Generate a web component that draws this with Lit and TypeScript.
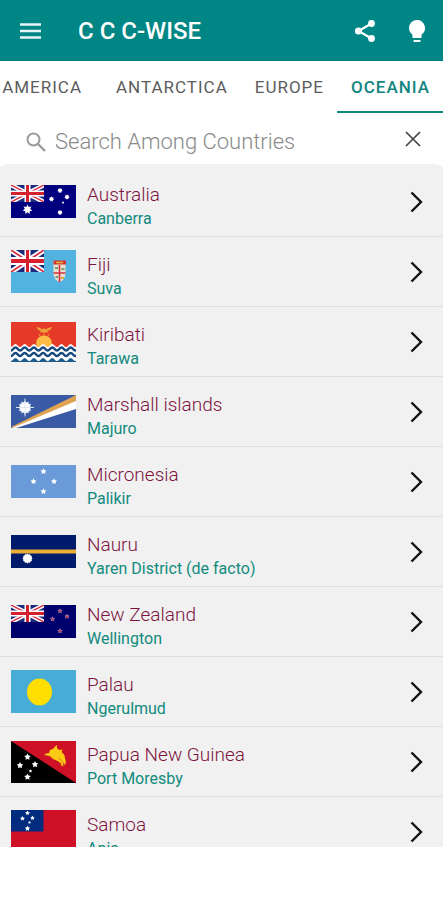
import { LitElement, html, svg, css, type SVGTemplateResult } from "lit";
import { customElement, property, state } from "lit/decorators.js";

interface Country {
  name: string;
  capital: string;
  height: number;
  flag: SVGTemplateResult;
}

/** Star with n points, centred on cx, cy. */
const star = (cx: number, cy: number, r: number, n = 5, inner = 0.5, fill = "#fff") => {
  const pts: string[] = [];
  for (let i = 0; i < n * 2; i++) {
    const a = (Math.PI * i) / n - Math.PI / 2;
    const q = i % 2 ? r * inner : r;
    pts.push(`${(cx + q * Math.cos(a)).toFixed(2)},${(cy + q * Math.sin(a)).toFixed(2)}`);
  }
  return svg`<polygon points=${pts.join(" ")} fill=${fill}></polygon>`;
};

const unionJack = (h: number) => svg`
  <svg width="33" height=${h} viewBox="0 0 60 30" preserveAspectRatio="none">
    <rect width="60" height="30" fill="#1c2a7c"></rect>
    <path d="M0 0L60 30M60 0L0 30" stroke="#fff" stroke-width="8"></path>
    <path d="M0 0L60 30M60 0L0 30" stroke="#d5263a" stroke-width="2.4"></path>
    <path d="M30 0V30M0 15H60" stroke="#fff" stroke-width="11"></path>
    <path d="M30 0V30M0 15H60" stroke="#d5202f" stroke-width="5.5"></path>
  </svg>`;

const wave = (y: number) => {
  let d = `M-7 ${y}`;
  for (let i = 0; i < 9; i++) d += "q2.3 -3 4.600 0t4.600 0";
  return d;
};

const countries: Country[] = [
  {
    name: "Australia", capital: "Canberra", height: 33,
    flag: svg`<rect width="65" height="33" fill="#00007e"></rect>${unionJack(17)}
      ${star(16.5, 24.5, 5, 7, 0.55)}${star(49, 5.5, 2.7, 7, 0.65)}${star(40.5, 14, 2.7, 7, 0.65)}
      ${star(56, 12, 2.7, 7, 0.65)}${star(52, 17.5, 1.5)}${star(49, 27.5, 2.7, 7, 0.65)}`,
  },
  {
    name: "Fiji", capital: "Suva", height: 43,
    flag: svg`<rect width="65" height="43" fill="#53b3e0"></rect>${unionJack(22)}
      <path d="M42.5 11h12v11q0 8-6 10q-6-2-6-10z" fill="#eadfd4"></path>
      <path d="M42.5 10.5h12.5v4h-12.5z" fill="#d4342a"></path>
      <path d="M45 12.5h7" stroke="#e9b23c" stroke-width="1.5"></path>
      <path d="M48.5 15v17M42.5 23h12" stroke="#d3303a" stroke-width="1.600"></path>
      <path d="M44 18h3M50.5 19h3M44.5 27h2.5" stroke="#7f9a62" stroke-width="1.800"></path>
      <path d="M50 28h3" stroke="#d9a640" stroke-width="2"></path>`,
  },
  {
    name: "Kiribati", capital: "Tarawa", height: 40,
    flag: svg`<rect width="65" height="40" fill="#e63a29"></rect>
      <circle cx="33" cy="21.5" r="8" fill="#fbbd46"></circle>
      <path d="M33 11v3M28 12l1 2M38 12l-1 2" stroke="#f08a35" stroke-width="1.200"></path>
      <path d="M25 5q4 0 6.500 2.500l1.500-1.500l1.500 1.500q3-2.500 7-2.500q-2 3.500-5.500 4l2 1.500h-9l1-1.500q-3-.5-5-4z" fill="#efa23a"></path>
      <path d="${wave(23.5)}V40H-7z" fill="#fff"></path>
      <path d=${wave(27)} fill="none" stroke="#17497f" stroke-width="2.300"></path>
      <path d=${wave(32.5)} fill="none" stroke="#17497f" stroke-width="2.300"></path>
      <path d="${wave(37.5)}V40H-7z" fill="#1d5c8c"></path>`,
  },
  {
    name: "Marshall islands", capital: "Majuro", height: 33,
    flag: svg`<rect width="65" height="33" fill="#3b5aa6"></rect>
      <path d="M0 32L65 0V7L2 33z" fill="#dfa351"></path>
      <path d="M1 33L65 6V14L5 33z" fill="#fff"></path>
      ${star(14, 12.5, 7, 12, 0.75, "#dfe6f2")}<circle cx="14" cy="12.5" r="5" fill="#fff"></circle>
      <path d="M14 3.5v18M5 12.5h18" stroke="#dfe6f2" stroke-width="1"></path>`,
  },
  {
    name: "Micronesia", capital: "Palikir", height: 33,
    flag: svg`<rect width="65" height="33" fill="#6b9ad8"></rect>
      ${star(32.5, 6.5, 3.2)}${star(22.5, 16.5, 3.2)}${star(43, 16.5, 3.2)}${star(32.5, 26.5, 3.2)}`,
  },
  {
    name: "Nauru", capital: "Yaren District (de facto)", height: 33,
    flag: svg`<rect width="65" height="33" fill="#001a6c"></rect>
      <rect y="14.5" width="65" height="4" fill="#e9ae33"></rect>
      ${star(16.5, 23.5, 5, 12, 0.85)}`,
  },
  {
    name: "New Zealand", capital: "Wellington", height: 33,
    flag: svg`<rect width="65" height="33" fill="#00006c"></rect>${unionJack(17)}
      ${[[49, 6], [41.5, 14], [56, 11.5], [49, 26]].map(
        ([x, y]) => svg`${star(x, y, 2.8, 5, 0.5, "#a58fb5")}${star(x, y, 1.8, 5, 0.5, "#b83a5c")}`)}`,
  },
  {
    name: "Palau", capital: "Ngerulmud", height: 43,
    flag: svg`<rect width="65" height="43" fill="#48add6"></rect>
      <ellipse cx="28.5" cy="22" rx="12.5" ry="13.5" fill="#ffde00"></ellipse>`,
  },
  {
    name: "Papua New Guinea", capital: "Port Moresby", height: 42,
    flag: svg`<rect width="65" height="42" fill="#ce1126"></rect><path d="M0 0V42H65z" fill="#000"></path>
      ${star(16.5, 16, 3.5)}${star(9, 24.5, 3.5)}${star(24, 23.5, 3.5)}
      ${star(19.5, 30, 1.8)}${star(16.5, 36, 3.5)}
      <path d="M33 14q2-2 5-2l1-3q2-1 3-1q2-3 4-4l0 3q1 1 2 2l4-.5q-2 2-1 3q3 2 3 6q1.500 3 0 7l-1.500-3l-1 4l-2-2l1-2q-2 1-3-1l-3-1.500q-3-.5-5-3.500q-3-1.500-6.500-1.500z" fill="#fcc915"></path>
      <path d="M47 17q4 1 6 6M50 24l3 1" stroke="#e08a1c" stroke-width="1" fill="none"></path>`,
  },
  {
    name: "Samoa", capital: "Apia", height: 43,
    flag: svg`<rect width="65" height="43" fill="#ce1126"></rect><rect width="32.5" height="21.5" fill="#002b7f"></rect>
      ${star(16.5, 3, 2.6)}${star(11.5, 8.5, 2.6)}${star(21.5, 8, 2.4)}
      ${star(18.5, 12.5, 1.6)}${star(16.5, 18.5, 2.8)}`,
  },
];

@customElement("country-row")
class CountryRow extends LitElement {
  @property({ attribute: false }) country!: Country;

  static styles = css`
    :host { display: block; }
    .row {
      display: flex;
      align-items: center;
      gap: 11px;
      box-sizing: border-box;
      height: 70px;
      padding: 0 20px 0 11px;
      border-bottom: 1px solid #dedede;
      color: #7d1440;
      text-decoration: none;
    }
    .flag { display: block; flex: none; }
    .text { flex: 1; min-width: 0; padding-top: 8px; }
    .name { display: block; font-size: 19px; line-height: 26px; font-weight: 300; }
    .capital { display: block; font-size: 16px; line-height: 22px; color: #128a7e; }
    .chevron { display: block; flex: none; }
  `;

  render() {
    const c = this.country;
    return html`<a class="row" href="#">
      <svg class="flag" width="65" height=${c.height} viewBox="0 0 65 ${c.height}" aria-hidden="true">${c.flag}</svg>
      <span class="text"><span class="name">${c.name}</span><span class="capital">${c.capital}</span></span>
      <svg class="chevron" width="13" height="22" viewBox="0 0 13 22" fill="none" stroke="#111" stroke-width="2.400" aria-hidden="true">
        <path d="M1.500 1.500L11 11L1.500 20.500"></path>
      </svg>
    </a>`;
  }
}

@customElement("app-root")
class AppRoot extends LitElement {
  @state() private active = "OCEANIA";

  static styles = css`
    :host {
      display: flex;
      flex-direction: column;
      height: 100vh;
      background: #fff;
      font-family: Roboto, sans-serif;
    }
    button {
      flex: none;
      margin: 0;
      padding: 0;
      border: 0;
      background: none;
      font: inherit;
      color: inherit;
      cursor: pointer;
    }
    svg { display: block; }
    .bar {
      display: flex;
      align-items: center;
      flex: none;
      height: 61px;
      padding: 0 17px 0 18px;
      background: #008684;
      color: #fff;
    }
    .title { flex: 1; margin: 0 0 0 36px; font-size: 24px; line-height: 32px; font-weight: 500; }
    .actions { display: flex; gap: 32px; }
    .tabs { display: flex; justify-content: flex-end; flex: none; height: 52px; overflow: hidden; }
    .tab {
      padding: 2px 13px 0 14px;
      border-bottom: 2px solid transparent;
      font-size: 17px;
      line-height: 24px;
      letter-spacing: 1px;
      color: #5c5c5c;
    }
    .tab:first-child { padding-right: 20px; padding-left: 0; }
    .tab.active { border-bottom-color: #12857f; color: #12857f; font-weight: 500; }
    .search { display: flex; align-items: center; flex: none; height: 51px; padding: 0 22px 0 26px; }
    .field {
      flex: 1;
      min-width: 0;
      margin: 6px 0 0 9px;
      padding: 0;
      border: 0;
      outline: 0;
      background: none;
      font: 300 22px/28px Roboto, sans-serif;
      color: #444;
    }
    .field::placeholder { color: #8a8a8a; opacity: 1; }
    .glass { margin-top: 6px; }
    .list {
      flex: 1;
      min-height: 0;
      overflow: hidden;
      margin: 0;
      padding: 3px 0 0;
      list-style: none;
      background: #f1f1f1;
      border-radius: 12px 12px 0 0 / 4px 4px 0 0;
    }
    .bottom { flex: none; height: 53px; }
  `;

  render() {
    return html`
      <header class="bar">
        <button aria-label="Menu">
          <svg width="24" height="24" viewBox="0 0 24 24" stroke="#e8f5f4" stroke-width="2.600"><path d="M2 5.500H23M2 12H23M2 18.500H23"></path></svg>
        </button>
        <h1 class="title">C C C-WISE</h1>
        <div class="actions">
          <button aria-label="Share">
            <svg width="22" height="24" viewBox="0 0 22 24" fill="#fff">
              <path d="M17.500 4.500L4.500 12L17.500 19.500" fill="none" stroke="#fff" stroke-width="2.200"></path>
              <circle cx="17.500" cy="4.500" r="3.400"></circle><circle cx="4.500" cy="12" r="3.600"></circle><circle cx="17.500" cy="19.500" r="3.400"></circle>
            </svg>
          </button>
          <button aria-label="Hint">
            <svg width="18" height="24" viewBox="0 0 18 24" fill="#fff">
              <path d="M9 1a8 8 0 0 0-8 8c0 2.700 1.300 5 3.400 6.500V18c0 .6.400 1 1 1h7.200c.6 0 1-.4 1-1v-2.500A8 8 0 0 0 9 1z"></path>
              <path d="M5.500 21h7v1c0 .6-.4 1-1 1h-5c-.6 0-1-.4-1-1z"></path>
            </svg>
          </button>
        </div>
      </header>
      <nav class="tabs" role="tablist">
        ${["AMERICA", "ANTARCTICA", "EUROPE", "OCEANIA"].map((t) => html`<button
          class="tab ${t === this.active ? "active" : ""}" role="tab"
          aria-selected=${t === this.active} @click=${() => (this.active = t)}>${t}</button>`)}
      </nav>
      <div class="search">
        <svg class="glass" width="20" height="20" viewBox="0 0 20 20" fill="none" stroke="#9b9b9b" stroke-width="2" aria-hidden="true">
          <circle cx="7.500" cy="7.500" r="6"></circle><path d="M12 12L19 19" stroke-width="2.400"></path>
        </svg>
        <input class="field" type="text" aria-label="Search Among Countries" placeholder="Search Among Countries" />
        <button aria-label="Clear">
          <svg width="16" height="16" viewBox="0 0 16 16" stroke="#444" stroke-width="1.700"><path d="M1 1L15 15M15 1L1 15"></path></svg>
        </button>
      </div>
      <ul class="list">
        ${countries.map((c) => html`<li><country-row .country=${c}></country-row></li>`)}
      </ul>
      <div class="bottom"></div>
    `;
  }
}
